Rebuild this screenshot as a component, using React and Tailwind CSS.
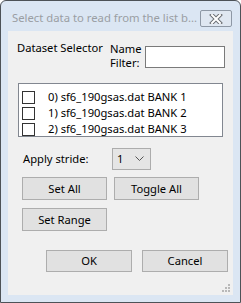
import React, { useState } from 'react';

const font = { fontFamily: '"Noto Sans", "Open Sans", sans-serif' };

const rows = [
    '0) sf6_190gsas.dat BANK 1',
    '1) sf6_190gsas.dat BANK 2',
    '2) sf6_190gsas.dat BANK 3',
];

const WinButton = ({ children, className = '' }) => (
    <button
        className={`bg-[#e1e1e1] border border-[#adadad] text-[11.2px] text-black leading-none flex items-center justify-center ${className}`}
    >
        {children}
    </button>
);

const App = () => {
    const [checked, setChecked] = useState([false, false, false]);

    const toggle = (i) => {
        const next = [...checked];
        next[i] = !next[i];
        setChecked(next);
    };

    return (
        <div className="w-[241px] h-[303px] bg-white" style={font}>
            <div className="w-[241px] h-[303px] flex flex-col bg-[#dbe6f3] border border-[#4d5257] rounded-t-[6px]">
                {/* title bar */}
                <div className="h-[30px] flex items-start shrink-0">
                    <div className="pl-[11px] pt-[9px] text-[11.3px] leading-[16px] text-[#9a9ea3] whitespace-nowrap overflow-hidden">
                        Select data to read from the list b...
                    </div>
                    <div className="ml-auto shrink-0 mr-[8px] mt-[9px] w-[32px] h-[17px] border border-[#8e98a5] rounded-[2px] bg-[#dfe7f1] flex items-center justify-center">
                        <svg width="14" height="10" viewBox="0 0 14 10">
                            <path d="M3 1 L11 9 M11 1 L3 9" stroke="#6b6f74" strokeWidth="4" strokeLinecap="square" />
                            <path d="M3 1 L11 9 M11 1 L3 9" stroke="#ffffff" strokeWidth="2" strokeLinecap="square" />
                        </svg>
                    </div>
                </div>

                {/* client area */}
                <div className="flex-1 mx-[7px] mb-[7px] bg-[#f0f0f0] flex flex-col relative">
                    <div className="flex items-start pt-[9px] h-[38px]">
                        <div className="pl-[9px] w-[102px] text-[11.2px] leading-[16px] text-black whitespace-nowrap">Dataset Selector</div>
                        <div className="w-[35px] pt-[2px] text-[11.2px] leading-[14px] text-black whitespace-nowrap">
                            <div>Name</div>
                            <div>Filter:</div>
                        </div>
                        <div className="mt-[6px] w-[80px] h-[22px] bg-white border border-[#7a7a7a]"></div>
                    </div>

                    <div className="ml-[10px] mt-[14px] w-[205px] h-[54px] bg-white border border-[#828790] pt-[5px]">
                        {rows.map((r, i) => (
                            <div key={i} className="flex items-center h-[16px]" onClick={() => toggle(i)}>
                                <div className="ml-[3px] w-[13px] h-[13px] border border-[#333333] bg-white flex items-center justify-center">
                                    {checked[i] && <span className="text-[10px] leading-none">✓</span>}
                                </div>
                                <span className="ml-[13px] text-[11.2px] leading-[16px] text-black whitespace-nowrap">{r}</span>
                            </div>
                        ))}
                    </div>

                    <div className="flex items-center mt-[11px] h-[22px]">
                        <span className="ml-[15px] w-[89px] text-[11.2px] leading-[16px] text-black whitespace-nowrap">Apply stride:</span>
                        <div className="w-[39px] h-[22px] bg-[#e5e5e5] border border-[#acacac] flex items-center">
                            <span className="ml-[4px] text-[11.2px] leading-none text-black">1</span>
                            <svg className="ml-auto mr-[6px]" width="9" height="6" viewBox="0 0 9 6">
                                <path d="M0.5 0.5 L4.5 4.5 L8.5 0.5" fill="none" stroke="#555" strokeWidth="1" />
                            </svg>
                        </div>
                    </div>

                    <div className="flex mt-[7px] pl-[14px] gap-[7px]">
                        <WinButton className="w-[85px] h-[23px]">Set All</WinButton>
                        <WinButton className="w-[85px] h-[23px]">Toggle All</WinButton>
                    </div>

                    <div className="flex mt-[8px] pl-[14px]">
                        <WinButton className="w-[85px] h-[23px]">Set Range</WinButton>
                    </div>

                    <div className="flex mt-[19px] pl-[38px] gap-[10px]">
                        <WinButton className="w-[86px] h-[22px]">OK</WinButton>
                        <WinButton className="w-[86px] h-[22px]">Cancel</WinButton>
                    </div>

                    {/* size grip */}
                    <svg className="absolute right-[3px] bottom-[3px]" width="8" height="8" viewBox="0 0 8 8">
                        <rect x="6" y="0" width="2" height="2" fill="#b8b8b8" />
                        <rect x="3" y="3" width="2" height="2" fill="#b8b8b8" />
                        <rect x="6" y="3" width="2" height="2" fill="#b8b8b8" />
                        <rect x="0" y="6" width="2" height="2" fill="#b8b8b8" />
                        <rect x="3" y="6" width="2" height="2" fill="#b8b8b8" />
                        <rect x="6" y="6" width="2" height="2" fill="#b8b8b8" />
                    </svg>
                </div>
            </div>
        </div>
    );
};

export default App;
